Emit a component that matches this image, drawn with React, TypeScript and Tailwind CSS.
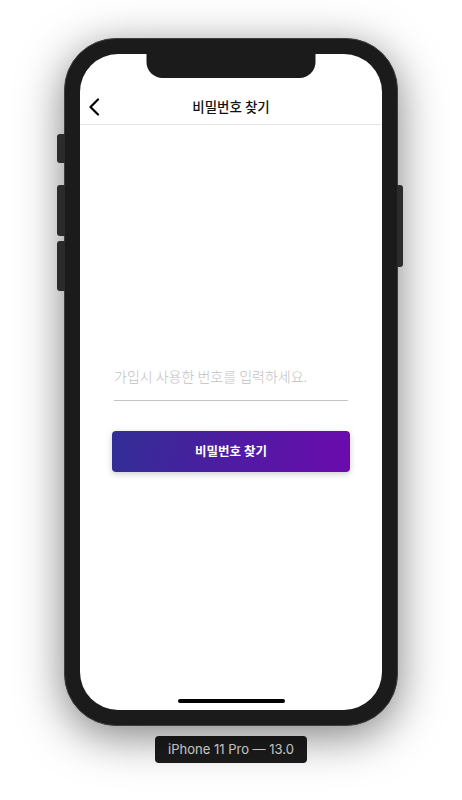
export default function App() {
  return (
    <div className="flex h-[800px] w-[462px] flex-col items-center bg-white pt-[38px] font-['Noto_Sans_CJK_KR','Noto_Sans',sans-serif]">
      {/* Device frame */}
      <div className="relative h-[688px] w-[334px] rounded-[52px] border border-[#3e3e3e] bg-[#1b1b1b] p-[15px] shadow-[0_10px_45px_rgba(0,0,0,0.5)]">
        {/* side buttons */}
        <div className="absolute left-[-8px] top-[95px] h-[29px] w-[8px] rounded-l-[3px] bg-[#2b2b2b]" />
        <div className="absolute left-[-8px] top-[146px] h-[51px] w-[8px] rounded-l-[3px] bg-[#2b2b2b]" />
        <div className="absolute left-[-8px] top-[202px] h-[50px] w-[8px] rounded-l-[3px] bg-[#2b2b2b]" />
        <div className="absolute right-[-6px] top-[146px] h-[82px] w-[6px] rounded-r-[3px] bg-[#2b2b2b]" />

        {/* Screen */}
        <div className="relative flex h-full w-full flex-col overflow-hidden rounded-[38px] bg-white">
          {/* notch */}
          <div className="absolute left-1/2 top-0 h-[24px] w-[169px] -translate-x-1/2 rounded-b-[16px] bg-[#1b1b1b]" />

          <div className="h-[35px] shrink-0" />

          {/* Header */}
          <div className="relative flex h-[36px] shrink-0 items-center justify-center border-b border-[#e6e6e6]">
            <button className="absolute left-[6px] top-1/2 flex h-[24px] w-[16px] -translate-y-1/2 items-center justify-center">
              <svg width="12" height="18" viewBox="0 0 12 18" fill="none">
                <path d="M10 1.5L2.5 9L10 16.5" stroke="#000" strokeWidth="2.2" strokeLinecap="round" strokeLinejoin="round" />
              </svg>
            </button>
            <span className="text-[13.5px] font-medium text-[#111]">비밀번호 찾기</span>
          </div>

          {/* Form */}
          <div className="flex flex-col items-center">
            <div className="mt-[234px] flex h-[42px] w-[234px] items-end border-b-[1.5px] border-[#c4c4c4] pb-[13px]">
              <input
                className="w-full bg-transparent text-[14px] font-light text-[#222] outline-none placeholder:text-[#c2c2c2]"
                placeholder="가입시 사용한 번호를 입력하세요."
              />
            </div>
            <button className="mt-[30px] flex h-[41px] w-[238px] items-center justify-center rounded-[4px] bg-[linear-gradient(100deg,#312e95,#6b0aae)] text-[12.5px] font-bold text-white shadow-[0_2px_6px_rgba(0,0,0,0.2)]">
              비밀번호 찾기
            </button>
          </div>

          {/* home indicator */}
          <div className="mt-auto mb-[7px] flex justify-center">
            <div className="h-[4px] w-[107px] rounded-full bg-black" />
          </div>
        </div>
      </div>

      <div className="mt-[10px] flex h-[27px] items-center rounded-[4px] bg-[#1c1c1c] px-[13px] font-['Inter',sans-serif] text-[13px] text-[#e2e2e2]">
        iPhone 11 Pro — 13.0
      </div>
    </div>
  );
}
